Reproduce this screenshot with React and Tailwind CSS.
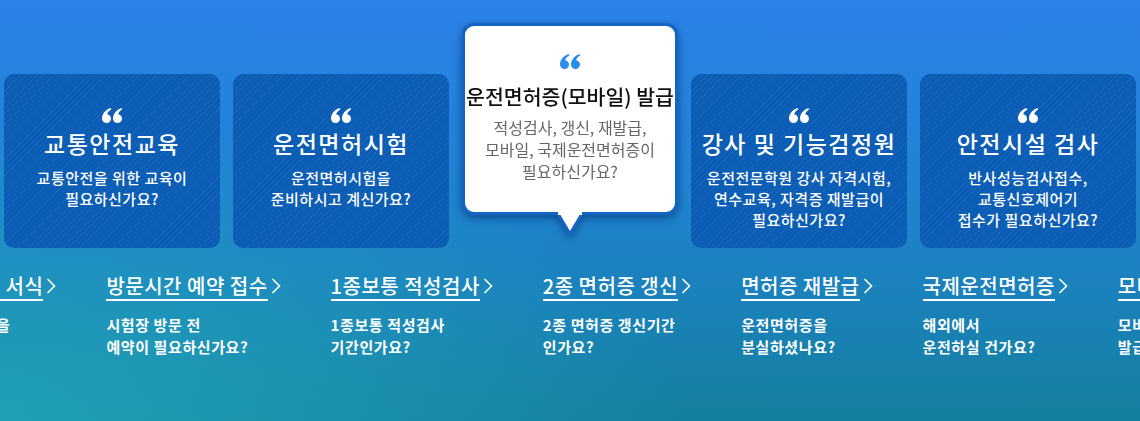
import React from "react";

const cards = [
  { title: "교통안전교육", lines: ["교통안전을 위한 교육이", "필요하신가요?"] },
  { title: "운전면허시험", lines: ["운전면허시험을", "준비하시고 계신가요?"] },
  {
    title: "운전면허증(모바일) 발급",
    lines: ["적성검사, 갱신, 재발급,", "모바일, 국제운전면허증이", "필요하신가요?"],
    active: true,
  },
  { title: "강사 및 기능검정원", lines: ["운전전문학원 강사 자격시험,", "연수교육, 자격증 재발급이", "필요하신가요?"] },
  { title: "안전시설 검사", lines: ["반사성능검사접수,", "교통신호제어기", "접수가 필요하신가요?"] },
];

const links = [
  { title: "민원 신청 서식", lines: ["필요한 서식을", "찾으시나요?"] },
  { title: "방문시간 예약 접수", lines: ["시험장 방문 전", "예약이 필요하신가요?"] },
  { title: "1종보통 적성검사", lines: ["1종보통 적성검사", "기간인가요?"] },
  { title: "2종 면허증 갱신", lines: ["2종 면허증 갱신기간", "인가요?"] },
  { title: "면허증 재발급", lines: ["운전면허증을", "분실하셨나요?"] },
  { title: "국제운전면허증", lines: ["해외에서", "운전하실 건가요?"] },
  { title: "모바일 운전면허증", lines: ["모바일 운전면허증", "발급이 필요하신가요?"] },
];

const Quote = ({ color }) => (
  <svg width="20" height="15" viewBox="0 0 20 15" className="mx-auto block" fill={color}>
    <path d="M8.6 0 L9.4 1.6 C7 2.8 5.4 4.6 5.2 6.2 C7.4 6.5 9 8.3 9 10.5 A4.5 4.5 0 0 1 0 10.5 C0 5.8 3.2 2 8.6 0 Z" />
    <path d="M19.6 0 L20 1.6 C18 2.8 16.4 4.6 16.2 6.2 C18.4 6.5 20 8.3 20 10.5 A4.5 4.5 0 0 1 11 10.5 C11 5.8 14.2 2 19.6 0 Z" />
  </svg>
);

const Card = ({ card }) => {
  if (card.active) {
    return (
      <div className="relative w-[216px] shrink-0 drop-shadow-[0_3px_4px_rgba(0,30,90,0.55)]">
        <div className="h-[192px] rounded-[12px] border-[3px] border-[#1464c3] bg-white pt-[28px] text-center">
          <Quote color="#2b8de8" />
          <div className="mt-[13px] text-[20.5px] leading-[28px] font-medium text-[#111] whitespace-nowrap">{card.title}</div>
          <div className="mt-[6px] text-[16px] leading-[22px] text-[#666]">
            {card.lines.map((l) => (
              <div key={l}>{l}</div>
            ))}
          </div>
        </div>
        <svg width="30" height="26" viewBox="0 0 30 26" className="absolute left-1/2 top-full -mt-[3px] -translate-x-1/2">
          <polygon points="2,0 15,22 28,0" fill="#fff" />
          <polyline points="2,0 15,22 28,0" fill="none" stroke="#1464c3" strokeWidth="3" />
          <rect x="3" y="0" width="24" height="3" fill="#fff" />
        </svg>
      </div>
    );
  }
  return (
    <div className="mt-[51px] h-[174px] w-[216px] shrink-0 rounded-[10px] bg-[#0a5cb4] bg-[repeating-linear-gradient(135deg,rgba(255,255,255,0.05)_0px,rgba(255,255,255,0.05)_1px,rgba(255,255,255,0)_1px,rgba(255,255,255,0)_4px)] pt-[34px] text-center text-white">
      <Quote color="#fff" />
      <div className="mt-[5px] text-[23px] leading-[30px] font-medium tracking-[1.5px] whitespace-nowrap">{card.title}</div>
      <div className="mt-[9px] text-[15px] leading-[21px] font-medium tracking-[0.5px] whitespace-nowrap">
        {card.lines.map((l) => (
          <div key={l}>{l}</div>
        ))}
      </div>
    </div>
  );
};

const LinkItem = ({ item }) => (
  <div className="shrink-0 text-white">
    <div className="flex items-start">
      <span className="border-b-2 border-white text-[20px] leading-[26px] font-medium tracking-[0.5px] whitespace-nowrap">{item.title}</span>
      <svg width="10" height="16" viewBox="0 0 10 16" className="mt-[5px] ml-[3px]">
        <polyline points="1.5,1 8.5,8 1.5,15" fill="none" stroke="#fff" strokeWidth="1.6" />
      </svg>
    </div>
    <div className="mt-[13px] text-[15px] leading-[22px] font-bold tracking-[0.6px] whitespace-nowrap">
      {item.lines.map((l) => (
        <div key={l}>{l}</div>
      ))}
    </div>
  </div>
);

export default function App() {
  return (
    <div className="relative h-[421px] w-full overflow-hidden font-['Noto_Sans_CJK_KR',sans-serif] bg-[radial-gradient(ellipse_60%_70%_at_0%_100%,rgba(38,175,190,0.7),rgba(38,175,190,0)),linear-gradient(to_bottom,#2b82e8_0%,#1f83d2_45%,#14809f_100%)]">
      <div className="flex items-start justify-center gap-[13px] pt-[23px]">
        {cards.map((c) => (
          <Card key={c.title} card={c} />
        ))}
      </div>
      <div className="mt-[25px] ml-[-80px] flex gap-[50px]">
        {links.map((it) => (
          <LinkItem key={it.title} item={it} />
        ))}
      </div>
    </div>
  );
}
